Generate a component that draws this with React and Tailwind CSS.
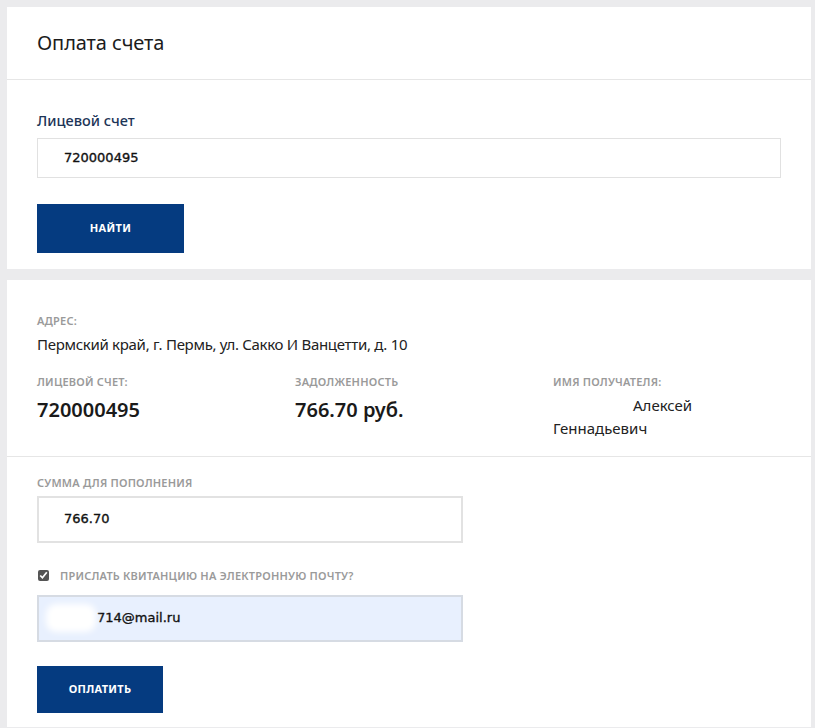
import React from 'react';

const labelCls = "text-[11px] font-semibold uppercase tracking-[0.2px] text-[#9a9a9a] leading-none";
const fieldText = "font-['DejaVu_Sans',sans-serif] text-[13px] text-[#111] [-webkit-text-stroke:0.35px_#111]";

const App = () => {
    return (
        <div className="min-h-[728px] bg-[#ebebed] pt-[7px] pl-[7px] pr-[4px] font-['Noto_Sans',sans-serif] text-[#222]">
            {/* Search card */}
            <div className="bg-white">
                <div className="h-[73px] border-b border-[#e6e6e6] flex items-center px-[30px]">
                    <h1 className="text-[20px] text-[#1c1c1c] tracking-[-0.1px]">Оплата счета</h1>
                </div>
                <div className="px-[30px] pt-[33px] pb-[16px]">
                    <div className="text-[14.5px] font-medium text-[#1d3557] leading-none mb-[10px]">Лицевой счет</div>
                    <div className={`h-[40px] border border-[#e1e1e1] flex items-center pl-[26px] ${fieldText}`}>
                        720000495
                    </div>
                    <button className="mt-[26px] w-[147px] h-[49px] bg-[#053b80] text-white text-[11px] font-bold tracking-[0.3px]">
                        НАЙТИ
                    </button>
                </div>
            </div>

            {/* Result card */}
            <div className="bg-white mt-[11px]">
                <div className="px-[30px] pt-[35px] pb-[16px] border-b border-[#e6e6e6]">
                    <div className={labelCls}>Адрес:</div>
                    <div className="text-[15px] mt-[11px] leading-none text-[#222] tracking-[-0.3px]">
                        Пермский край, г. Пермь, ул. Сакко И Ванцетти, д. 10
                    </div>
                    <div className="grid grid-cols-[258px_258px_1fr] mt-[24px]">
                        <div>
                            <div className={labelCls}>Лицевой счет:</div>
                            <div className="text-[20px] font-semibold mt-[13px] leading-none text-[#1a1a1a]">720000495</div>
                        </div>
                        <div>
                            <div className={labelCls}>Задолженность</div>
                            <div className="text-[20px] font-semibold mt-[13px] leading-none text-[#1a1a1a]">766.70 руб.</div>
                        </div>
                        <div>
                            <div className={labelCls}>Имя получателя:</div>
                            <div className="text-[15px] mt-[7px] leading-[23px] text-[#222]">
                                <div className="pl-[80px]">Алексей</div>
                                <div>Геннадьевич</div>
                            </div>
                        </div>
                    </div>
                </div>

                <div className="px-[30px] pt-[20px] pb-[14px]">
                    <div className={labelCls}>Сумма для пополнения</div>
                    <div className={`mt-[8px] w-[426px] h-[47px] border-2 border-[#e2e2e2] flex items-center pl-[25px] ${fieldText}`}>
                        766.70
                    </div>
                    <label className="flex items-center mt-[27px] gap-[11px]">
                        <input type="checkbox" defaultChecked className="w-[11px] h-[11px] ml-[1px] accent-[#555]" />
                        <span className={labelCls}>Прислать квитанцию на электронную почту?</span>
                    </label>
                    <div className={`mt-[14px] w-[426px] h-[47px] border-2 border-[#d6dbe3] bg-[#e8f0fe] flex items-center ${fieldText}`}>
                        <span className="ml-[7px] w-[50px] h-[28px] bg-white rounded-[10px] blur-[3px]" />
                        <span className="ml-[1px]">714@mail.ru</span>
                    </div>
                    <button className="mt-[24px] w-[126px] h-[47px] bg-[#053b80] text-white text-[11px] font-bold tracking-[0.3px]">
                        ОПЛАТИТЬ
                    </button>
                </div>
            </div>
        </div>
    );
};

export default App;
